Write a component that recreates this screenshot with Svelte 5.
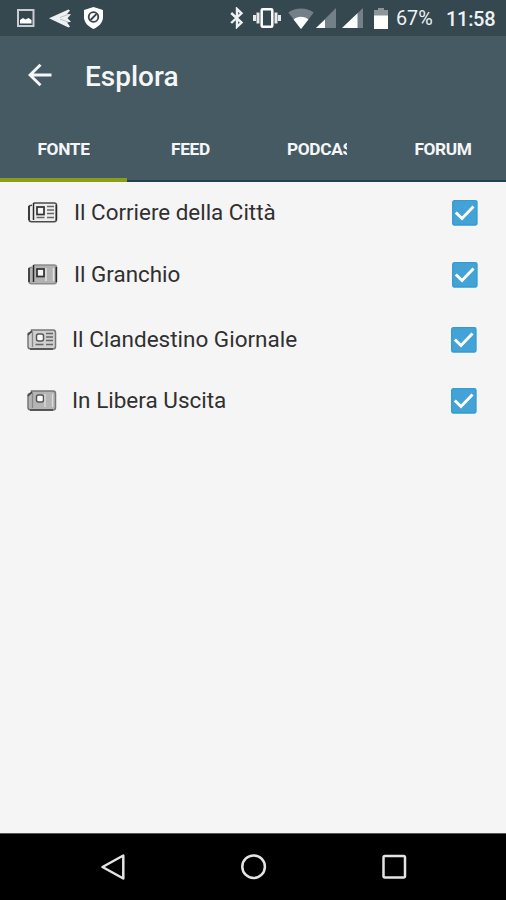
<script lang="ts">
	type Source = { name: string; lines: boolean; dim: boolean; checked: boolean };

	const tabs = ['FONTE', 'FEED', 'PODCAST', 'FORUM'];
	let active = $state(0);

	let sources: Source[] = $state([
		{ name: 'Il Corriere della Città', lines: true, dim: false, checked: true },
		{ name: 'Il Granchio', lines: false, dim: false, checked: true },
		{ name: 'Il Clandestino Giornale', lines: true, dim: true, checked: true },
		{ name: 'In Libera Uscita', lines: false, dim: true, checked: true }
	]);
</script>

<div class="screen">
	<div class="status-bar">
		<svg class="picture" width="18" height="18" viewBox="0 0 18 18">
			<rect x="1" y="1" width="15.5" height="16" fill="#34454d" stroke="#c9ccd2" stroke-width="2" />
			<path d="M3 14.5V11l3-2 2.500 1.500 3-1.500 3 2v3.500z" fill="#fff" />
		</svg>
		<svg class="plane" width="23" height="19" viewBox="0 0 23 19">
			<path d="M0 9.300 19.500.5l1.500 1-3 3.500 4 .3-3.500 4 3.500 3.500-4 .8 3 4-1.500 1z" fill="#eef1f3" />
			<path d="m11 8.500 8-3M11 10l8 3" stroke="#a9b3b8" stroke-width=".8" />
		</svg>
		<svg class="shield" width="21" height="24" viewBox="0 0 21 24">
			<path d="M10.5 1 20 4v7c0 5.500-4 9.500-9.500 12C5 20.500 1 16.500 1 11V4z" fill="#fff" />
			<circle cx="10.500" cy="11" r="4.800" fill="none" stroke="#34454d" stroke-width="1.800" />
			<path d="m7.500 14 6-6" stroke="#34454d" stroke-width="1.800" />
		</svg>
		<span class="space"></span>
		<svg class="bluetooth" width="14" height="22" viewBox="0 0 14 22">
			<path d="m1.200 6 10.300 9.500L7 19.800V2l4.500 4.300L1.200 16" fill="none" stroke="#eef1f3" stroke-width="2.400" />
		</svg>
		<svg class="vibrate" width="28" height="22" viewBox="0 0 28 22">
			<rect x="8.700" y="2.200" width="10.600" height="17.600" rx="1" fill="none" stroke="#fff" stroke-width="2.500" />
			<path d="M5 5.500v11M1.500 8v6M23 5.500v11M26.500 8v6" stroke="#e6eaec" stroke-width="3" />
		</svg>
		<svg class="wifi" width="26" height="21" viewBox="0 0 26 21">
			<path d="M13 21 .3 4.600C7.500-1 18.500-1 25.700 4.600z" fill="#748087" />
			<path d="M13 21 5.600 11.400C9.500 7.800 16.500 7.800 20.400 11.400z" fill="#fff" />
		</svg>
		<svg class="signal" width="21" height="20" viewBox="0 0 21 20">
			<path d="M0 20 20 0v20z" fill="#748087" />
			<path d="M0 20 9 11.500V20z" fill="#fff" />
		</svg>
		<svg class="signal second" width="21" height="20" viewBox="0 0 21 20">
			<path d="M0 20 21 0v20z" fill="#748087" />
			<path d="M0 20 15.500 5.200V20z" fill="#fff" />
		</svg>
		<svg class="battery" width="14" height="21" viewBox="0 0 14 21">
			<path d="M0 2h4V0h6v2h4v6H0z" fill="#8b959a" />
			<path d="M0 7.500h14V21H0z" fill="#fff" />
		</svg>
		<span class="percent">67%</span>
		<span class="clock">11:58</span>
	</div>

	<header class="toolbar">
		<svg class="back" width="24" height="24" viewBox="0 0 24 24">
			<path d="M23.500 12H2.500M12.500 1.700 2 12l10.500 10.300" fill="none" stroke="#f4f6f8" stroke-width="2.900" />
		</svg>
		<h1>Esplora</h1>
	</header>

	<nav class="tabs">
		{#each tabs as tab, i}
			<button class="tab" class:active={active === i} onclick={() => (active = i)}>
				<span>{tab}</span>
			</button>
		{/each}
	</nav>

	<main class="list">
		{#each sources as source}
			<label class="row" class:dim={source.dim}>
				<svg class="paper" width="30" height="21" viewBox="0 0 30 21">
					{#if source.dim}
						<path d="M4.500 1H26q2.500 0 2.500 2.500v14q0 2.500-2.500 2.500H4q-3 0-3-2.500V5q0-1.500 3.500-2z" fill={source.lines ? '#d0d0d0' : '#b5b5b5'} stroke="#777" stroke-width="1.500" />
						<path d="M5.500 3v15" stroke="#888" stroke-width="1.300" />
						<path d="M3 20h23M1 6l4-4" stroke="#444" stroke-width="1.500" />
						<rect x="9.500" y="5" width="7" height="7" rx="2" fill="#fff" stroke="#555" stroke-width="1.500" />
					{:else}
						<path d="M5.500 1H26q2.500 0 2.500 2v14.500q0 2.200-2.500 2.200H3.500Q1 19.700 1 17.500V5q0-1.700 3-1.700" fill={source.lines ? '#eee' : '#b2b2b2'} stroke={source.lines ? '#4b4b4b' : '#8c8c8c'} stroke-width="1.500" />
						<path d="M5.500 1v17M1 4v14M28.300 3v15" stroke="#292929" stroke-width="1.500" />
						<rect x="9" y="5" width="7" height="7.500" fill="#f5f5f5" stroke="#303030" stroke-width="1.700" />
					{/if}
					{#if source.lines}
						<path d="M19 4.500h7M19 8h7M19 11.500h7M19 15.500h7M8.500 15.500h8" stroke="#666" stroke-width="1.400" />
					{:else if source.dim}
						<path d="M18 4v13M25.500 4v13" stroke="#ddd" stroke-width="1.300" />
					{:else}
						<path d="M18 4v13M25.500 4v13" stroke="#e2e2e2" stroke-width="1.500" />
					{/if}
				</svg>
				<span class="name">{source.name}</span>
				<input type="checkbox" bind:checked={source.checked} />
				<svg class="box" width="26" height="26" viewBox="0 0 26 26">
					<rect x=".7" y=".7" width="24.300" height="24.300" rx="1.500" fill={source.checked ? '#43a3d6' : 'none'} stroke="#369bd0" stroke-width="1.300" />
					{#if source.checked}
						<path d="m3.800 12.500 6.200 6L21.500 6.500" fill="none" stroke="#fff" stroke-width="2.900" />
					{/if}
				</svg>
			</label>
		{/each}
	</main>

	<footer class="nav-bar">
		<svg width="28" height="28" viewBox="0 0 28 28">
			<path d="M3.500 14 24.300 2.500v23z" fill="none" stroke="#e4e4e4" stroke-width="2.500" stroke-linejoin="round" />
		</svg>
		<svg width="28" height="28" viewBox="0 0 28 28">
			<circle cx="13.600" cy="13.700" r="11.300" fill="none" stroke="#e4e4e4" stroke-width="2.500" />
		</svg>
		<svg width="28" height="28" viewBox="0 0 28 28">
			<rect x="3.500" y="3" width="21.500" height="21.500" rx="1.500" fill="none" stroke="#e4e4e4" stroke-width="2.500" />
		</svg>
	</footer>
</div>

<style>
	:global(body) {
		margin: 0;
	}

	.screen {
		width: 506px;
		height: 900px;
		display: flex;
		flex-direction: column;
		overflow: hidden;
		background: #f5f5f5;
		font-family: Roboto, sans-serif;
	}

	svg {
		display: block;
		flex: none;
	}

	.status-bar {
		box-sizing: border-box;
		height: 36px;
		padding: 0 11px 0 17px;
		display: flex;
		align-items: center;
		background: #35474f;
		color: #eef2f4;
		white-space: nowrap;
	}

	.plane {
		margin-left: 14px;
	}

	.shield {
		margin-left: 11px;
	}

	.space {
		flex: 1;
	}

	.vibrate {
		margin-left: 9px;
	}

	.wifi {
		margin-left: 7px;
	}

	.signal {
		margin-left: 2px;
	}

	.signal.second {
		margin-left: 5px;
	}

	.battery {
		margin-left: 11px;
	}

	.percent {
		width: 39px;
		margin-left: 8px;
		padding-top: 2px;
		font-size: 19.8px;
		line-height: 38px;
	}

	.clock {
		width: 49px;
		margin-left: 11px;
		padding-top: 2px;
		font-size: 20px;
		font-weight: 500;
		line-height: 38px;
		letter-spacing: -0.3px;
	}

	.toolbar {
		box-sizing: border-box;
		height: 80px;
		padding: 0 0 1px 28px;
		display: flex;
		align-items: center;
		background: #465a63;
	}

	.back {
		margin-bottom: 1px;
	}

	h1 {
		margin: 2px 0 0 33px;
		color: #f4f6f8;
		font-size: 28px;
		font-weight: 500;
		line-height: 32px;
	}

	.tabs {
		box-sizing: border-box;
		height: 66px;
		display: grid;
		grid-template-columns: 127px 127px 126px 126px;
		background: #465a63;
		box-shadow: inset 0 -2px #1f424e;
	}

	.tab {
		margin: 0;
		padding: 3px 0 0;
		border: 0;
		border-bottom: 4px solid transparent;
		background: none;
		color: #f4f6f8;
		font: 700 17.3px/22px Roboto, sans-serif;
		letter-spacing: -0.35px;
	}

	.tab.active {
		border-bottom-color: #8c9d16;
	}

	.tab span {
		display: block;
		width: fit-content;
		max-width: 60px;
		margin: 0 auto;
		overflow: hidden;
		white-space: nowrap;
	}

	.list {
		flex: 1;
	}

	.row {
		box-sizing: border-box;
		height: 62px;
		padding: 0 28px 1px;
		display: flex;
		align-items: center;
		color: #303030;
	}

	.row.dim {
		padding: 0 29px 1px 27px;
	}

	.row:nth-child(3) {
		margin-top: 3px;
	}

	.row:nth-child(4) {
		margin-top: -1px;
	}

	.name {
		flex: 1;
		margin-left: 16px;
		padding-bottom: 2px;
		font-size: 22.4px;
		line-height: 28px;
	}

	.row.dim .name {
		margin-left: 15px;
		font-size: 22.5px;
	}

	.row input {
		width: 0;
		height: 0;
		margin: 0;
		appearance: none;
	}

	.nav-bar {
		box-sizing: border-box;
		height: 67px;
		padding: 0 98px 0 99px;
		display: flex;
		align-items: center;
		justify-content: space-between;
		border-top: 1px solid #555;
		background: #000;
	}
</style>
